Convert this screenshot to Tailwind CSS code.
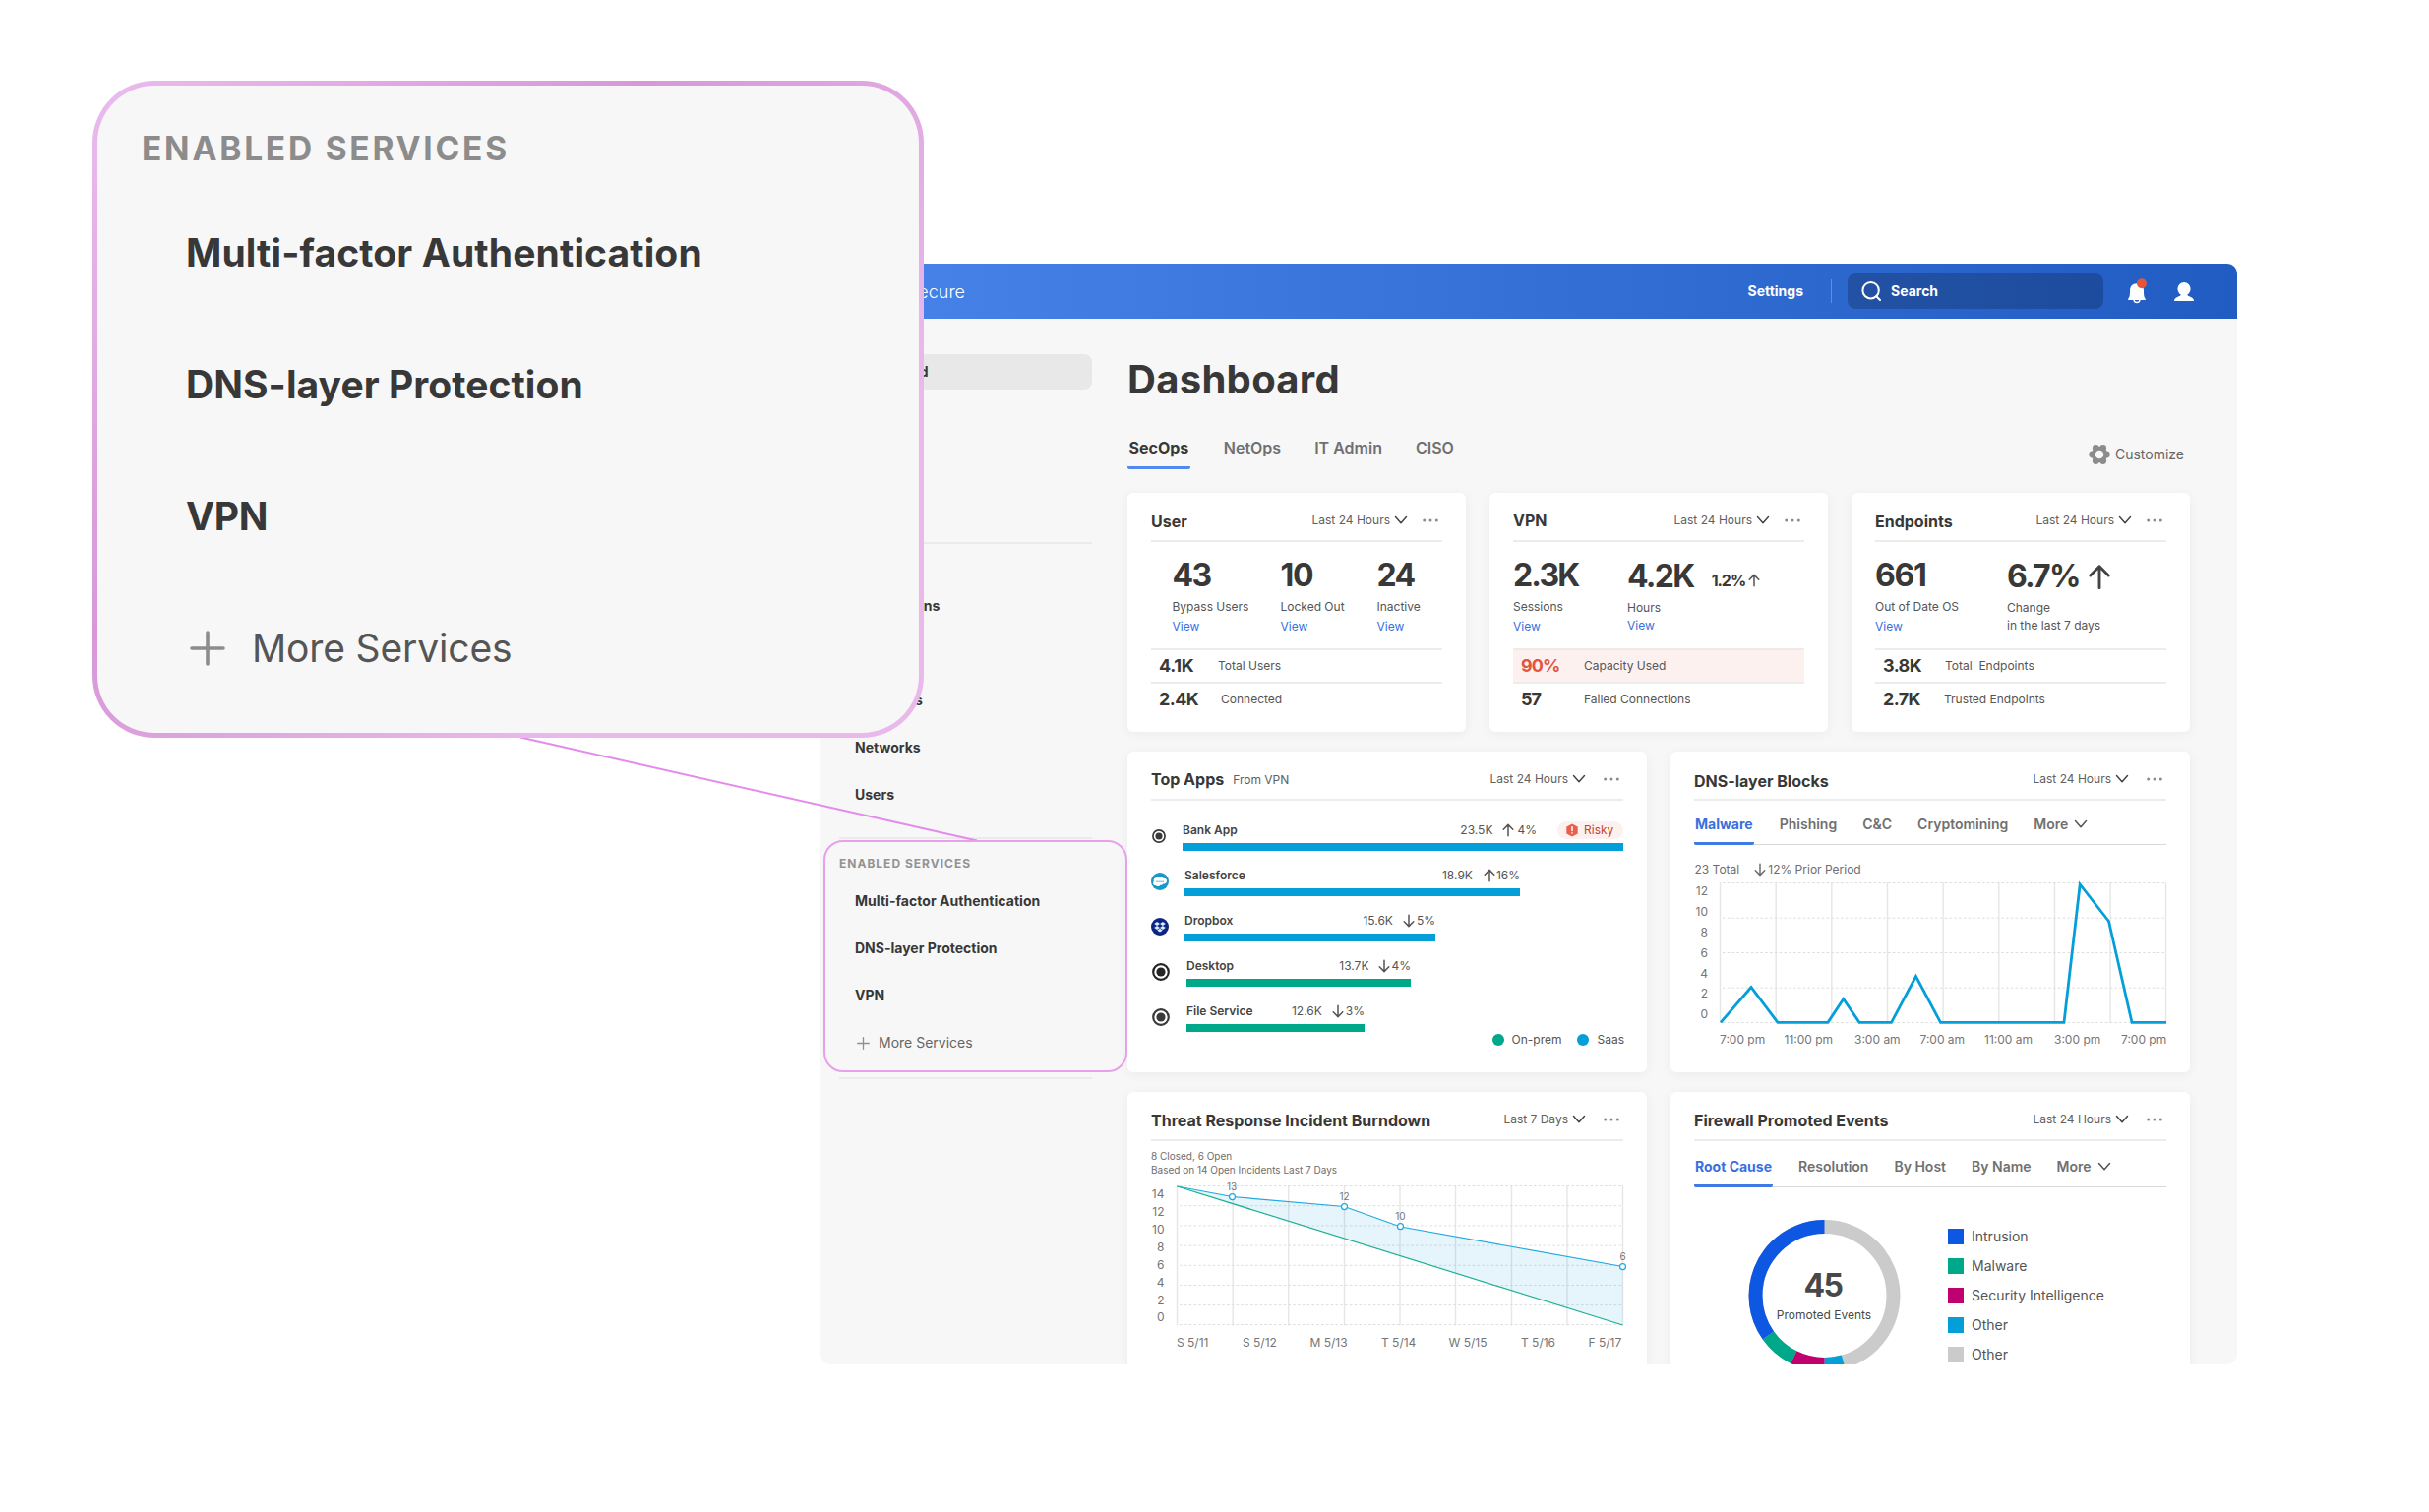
<!DOCTYPE html>
<html lang="en">
<head>
  <meta charset="UTF-8">
  <title>Secure - Dashboard</title>
  <meta name="viewport" content="width=device-width, initial-scale=1.0">
  <script src="https://cdn.jsdelivr.net/npm/@tailwindcss/browser@4"></script>
</head>
<body class="relative bg-white w-[2469px] h-[1537px] overflow-hidden font-['Inter',sans-serif] text-[#373837]">

  <!-- Shared icons -->
  <svg class="hidden">
    <symbol id="chevron" viewBox="0 0 14 10"><path d="M1.5 1.5 7 7.8 12.5 1.5" fill="none" stroke="currentColor" stroke-width="1.5" stroke-linecap="round" stroke-linejoin="round"/></symbol>
    <symbol id="dots" viewBox="0 0 16 4"><circle cx="1.7" cy="2" r="1.5"/><circle cx="8" cy="2" r="1.5"/><circle cx="14.3" cy="2" r="1.5"/></symbol>
    <symbol id="up" viewBox="0 0 12 14"><path d="M6 12.8V1.4M1.2 6.2 6 1.4l4.8 4.8" fill="none" stroke="currentColor" stroke-width="1.5" stroke-linecap="round" stroke-linejoin="round"/></symbol>
    <symbol id="down" viewBox="0 0 12 14"><path d="M6 1.2v11.4M1.2 7.8 6 12.6l4.8-4.8" fill="none" stroke="currentColor" stroke-width="1.5" stroke-linecap="round" stroke-linejoin="round"/></symbol>
    <symbol id="ring" viewBox="0 0 18 18"><circle cx="9" cy="9" r="7.8" fill="#fff" stroke="currentColor" stroke-width="2.2"/><circle cx="9" cy="9" r="4.6" fill="currentColor"/></symbol>
    <symbol id="plus" viewBox="0 0 36 36"><path d="M18 2v32M2 18h32" stroke="currentColor" stroke-width="3.6" stroke-linecap="round"/></symbol>
  </svg>

  <!-- App window -->
  <div class="ml-[834px] mt-[268px] w-[1440px] h-[1119px] rounded-[10px] overflow-hidden bg-[#f7f7f7]">
    <header class="flex items-center h-14 pr-11 bg-linear-to-r from-[#4884ea] to-[#215cc3] text-white text-sm font-bold">
      <span class="w-[147px] pt-0.5 text-right text-lg font-light">Secure</span>
      <span class="ml-auto">Settings</span>
      <span class="w-px h-6 ml-7 mr-4 bg-white/25"></span>
      <div class="flex items-center gap-2.5 w-[260px] h-9 pl-3.5 rounded-lg bg-black/20">
        <svg class="w-5 h-5" viewBox="0 0 20 20" fill="none" stroke="#fff" stroke-width="2" stroke-linecap="round"><circle cx="9.6" cy="9.2" r="8.2"/><path d="m15.2 15.2 3.8 3.8"/></svg>
        <span>Search</span>
      </div>
      <svg class="ml-6 w-5 h-[26px]" viewBox="0 0 20 26">
        <path d="M10 5.200c-4.600 0-7 3.200-7 7.200 0 5.200-.4 6.800-1.800 8.300v1.200h17.600v-1.200c-1.400-1.500-1.800-3.100-1.800-8.300 0-4-2.400-7.200-7-7.200z" fill="#fff"/>
        <path d="M7 21.500a3 3 0 0 0 6 0" fill="none" stroke="#fff" stroke-width="1.400"/>
        <circle cx="15" cy="5.200" r="5" fill="#e2563f"/>
      </svg>
      <svg class="ml-7 w-5 h-[19px]" viewBox="0 0 20 19" fill="#fff"><ellipse cx="10" cy="6.800" rx="6.600" ry="6.800"/><path d="M7 11.500h6c0 2.200 1.500 2.600 3.800 3.400 2.200.8 3.200 2.200 3.200 4.100H0c0-1.900 1-3.300 3.200-4.100C5.500 14.100 7 13.700 7 11.500z"/></svg>
    </header>

    <div class="flex">
      <!-- Sidebar -->
      <nav class="w-[276px] pl-[19px] text-sm font-bold">
        <div class="flex items-center mt-9 h-9 pl-4 rounded-lg bg-[#e8e8e8]">Dashboard</div>
        <div class="mt-[155px] h-0.5 bg-[#ebebeb]"></div>
        <ul class="mt-[39px] pl-4 leading-12">
          <li>Applications</li>
          <li class="mt-12">Endpoints</li>
          <li>Networks</li>
          <li>Users</li>
        </ul>
        <div class="mt-[19px] h-0.5 bg-[#ebebeb]"></div>
        <h3 class="mt-[17px] text-xs leading-4 font-bold tracking-[1px] text-[#939393]">ENABLED SERVICES</h3>
        <ul class="mt-1.5 pl-4 leading-12">
          <li class="tracking-[0.040px]">Multi-factor Authentication</li>
          <li>DNS-layer Protection</li>
          <li>VPN</li>
          <li class="flex items-center gap-[9.500px] pl-[1.500px] font-normal text-[#666]"><svg class="w-[13px] h-[13px] text-[#8f8f8f]"><use href="#plus"/></svg>More Services</li>
        </ul>
        <div class="mt-[11px] h-0.5 bg-[#ebebeb]"></div>
      </nav>

      <!-- Dashboard -->
      <main class="w-[1080px] ml-9">
        <h1 class="pt-[38px] text-[40px] leading-12 font-bold tracking-[0.300px]">Dashboard</h1>

        <div class="flex justify-between mt-[23px] h-11">
          <div class="flex gap-[34px] font-semibold text-[#707070]">
            <span class="flex items-center px-[1.500px] pt-[3px] border-b-[3px] border-[#5389ee] rounded-b-xs font-bold text-[#373837]">SecOps</span>
            <span class="flex items-center">NetOps</span>
            <span class="flex items-center">IT Admin</span>
            <span class="flex items-center">CISO</span>
          </div>
          <div class="flex items-center gap-[5px] pt-3.5 pr-1.5 text-sm text-[#666]">
            <svg class="w-[22px] h-[22px]" viewBox="-11 -11 22 22" fill="#8c8c8c">
              <circle r="8.200"/><circle cx="7.300" r="3.400"/><circle cx="-7.300" r="3.400"/><circle cx="3.700" cy="6.500" r="3.400"/><circle cx="-3.700" cy="6.500" r="3.400"/><circle cx="3.700" cy="-6.500" r="3.400"/><circle cx="-3.700" cy="-6.500" r="3.400"/><circle r="4.300" fill="#f7f7f7"/>
            </svg>
            Customize
          </div>
        </div>

        <!-- Row 1 -->
        <div class="grid grid-cols-3 gap-6 mt-6">
          <section class="h-[243px] px-6 rounded-md bg-white shadow-[0_2px_12px_rgba(0,0,0,0.05)]">
            <div class="flex items-center h-[50px] pt-2 border-b-2 border-[#ececec]">
              <h2 class="pt-0.5 font-bold">User</h2>
              <span class="ml-auto text-xs text-[#606060]">Last 24 Hours</span>
              <svg class="ml-1 w-3.5 h-2.5 text-[#444]"><use href="#chevron"/></svg>
              <svg class="ml-[15px] mr-1 w-4 h-1 fill-[#8a8a8a]"><use href="#dots"/></svg>
            </div>
            <div class="flex h-[108px] pt-4 pl-[21.500px] text-xs leading-5 text-[#555]">
              <div class="w-[110px]">
                <div class="mb-1 text-[32px] leading-9 font-bold tracking-[-1.700px] text-[#373837]">43</div>
                <div>Bypass Users</div>
                <div class="text-[#3a70de]">View</div>
              </div>
              <div class="w-[98px]">
                <div class="mb-1 text-[32px] leading-9 font-bold tracking-[-1.300px] text-[#373837]">10</div>
                <div>Locked Out</div>
                <div class="text-[#3a70de]">View</div>
              </div>
              <div>
                <div class="mb-1 text-[32px] leading-9 font-bold tracking-[-1.700px] text-[#373837]">24</div>
                <div>Inactive</div>
                <div class="text-[#3a70de]">View</div>
              </div>
            </div>
            <div class="flex items-center h-[34px] pl-2 border-t-2 border-[#ececec] text-xs text-[#555]">
              <b class="w-[60px] text-lg tracking-[-0.300px] text-[#373837]">4.1K</b>Total Users
            </div>
            <div class="flex items-center h-[34px] pl-2 border-t-2 border-[#ececec] text-xs text-[#555]">
              <b class="w-[63px] text-lg tracking-[-0.600px] text-[#373837]">2.4K</b>Connected
            </div>
          </section>

          <section class="h-[243px] px-6 rounded-md bg-white shadow-[0_2px_12px_rgba(0,0,0,0.05)]">
            <div class="flex items-center h-[50px] pt-2 border-b-2 border-[#ececec]">
              <h2 class="font-bold">VPN</h2>
              <span class="ml-auto text-xs text-[#606060]">Last 24 Hours</span>
              <svg class="ml-1 w-3.5 h-2.5 text-[#444]"><use href="#chevron"/></svg>
              <svg class="ml-[15px] mr-1 w-4 h-1 fill-[#8a8a8a]"><use href="#dots"/></svg>
            </div>
            <div class="flex h-[108px] pt-4 text-xs leading-5 text-[#555]">
              <div class="w-[116px]">
                <div class="mb-1 text-[32px] leading-9 font-bold tracking-[-1.800px] text-[#373837]">2.3K</div>
                <div>Sessions</div>
                <div class="text-[#3a70de]">View</div>
              </div>
              <div class="pt-px leading-[18px]">
                <div class="flex items-center mb-[5px] text-[32px] leading-9 font-bold tracking-[-1.700px] text-[#373837]">
                  4.2K
                  <span class="ml-[18px] pt-[7px] text-base tracking-[-1px]">1.2%</span>
                  <svg class="ml-[3px] mt-[7px] w-3 h-3.5 text-[#555]"><use href="#up"/></svg>
                </div>
                <div>Hours</div>
                <div class="text-[#3a70de]">View</div>
              </div>
            </div>
            <div class="flex items-center h-[34px] pl-2 border-t-2 border-[#f0e9e8] bg-[#fcf1ef] text-xs text-[#555]">
              <b class="w-[64px] text-lg tracking-[-0.900px] text-[#e2563f]">90%</b>Capacity Used
            </div>
            <div class="flex items-center h-[34px] pl-2 border-t-2 border-[#ececec] text-xs text-[#555]">
              <b class="w-[64px] text-lg tracking-[-0.900px] text-[#373837]">57</b>Failed Connections
            </div>
          </section>

          <section class="h-[243px] px-6 rounded-md bg-white shadow-[0_2px_12px_rgba(0,0,0,0.05)]">
            <div class="flex items-center h-[50px] pt-2 border-b-2 border-[#ececec]">
              <h2 class="pt-0.5 font-bold">Endpoints</h2>
              <span class="ml-auto text-xs text-[#606060]">Last 24 Hours</span>
              <svg class="ml-1 w-3.5 h-2.5 text-[#444]"><use href="#chevron"/></svg>
              <svg class="ml-[15px] mr-1 w-4 h-1 fill-[#8a8a8a]"><use href="#dots"/></svg>
            </div>
            <div class="flex h-[108px] pt-4 text-xs leading-5 text-[#555]">
              <div class="w-[134px]">
                <div class="mb-1 text-[32px] leading-9 font-bold tracking-[-1.300px] text-[#373837]">661</div>
                <div>Out of Date OS</div>
                <div class="text-[#3a70de]">View</div>
              </div>
              <div class="pt-px leading-[18px]">
                <div class="flex items-center mb-[5px] text-[32px] leading-9 font-bold tracking-[-1.800px] text-[#373837]">
                  6.7%
                  <svg class="ml-2 w-6 h-[27px] text-[#444]"><use href="#up"/></svg>
                </div>
                <div>Change</div>
                <div>in the last 7 days</div>
              </div>
            </div>
            <div class="flex items-center h-[34px] pl-2 border-t-2 border-[#ececec] text-xs text-[#555]">
              <b class="w-[63px] text-lg tracking-[-0.600px] text-[#373837]">3.8K</b>Total&nbsp; Endpoints
            </div>
            <div class="flex items-center h-[34px] pl-2 border-t-2 border-[#ececec] text-xs text-[#555]">
              <b class="w-[62px] text-lg tracking-[-0.600px] text-[#373837]">2.7K</b>Trusted Endpoints
            </div>
          </section>
        </div>

        <div class="grid grid-cols-2 gap-x-6 gap-y-5 mt-5">
          <!-- Top Apps -->
          <section class="h-[326px] px-6 rounded-md bg-white shadow-[0_2px_12px_rgba(0,0,0,0.05)]">
            <div class="flex items-center h-[50px] pt-2 border-b-2 border-[#ececec]">
              <h2 class="font-bold">Top Apps</h2>
              <span class="ml-[9px] pt-0.5 text-xs text-[#606060]">From VPN</span>
              <span class="ml-auto text-xs text-[#606060]">Last 24 Hours</span>
              <svg class="ml-1 w-3.5 h-2.5 text-[#444]"><use href="#chevron"/></svg>
              <svg class="ml-[18px] mr-1 w-4 h-1 fill-[#8a8a8a]"><use href="#dots"/></svg>
            </div>
            <ul class="flex flex-col gap-4 pt-[21px] text-xs leading-[18px] text-[#555]">
              <li class="flex items-center h-[30px]">
                <svg class="ml-px mr-[17px] w-3.5 h-3.5 text-[#3a3a3a]"><use href="#ring"/></svg>
                <div class="w-[448px]">
                  <div class="flex items-center">
                    <span class="mr-auto font-semibold text-[#444]">Bank App</span>23.5K
                    <svg class="ml-2.5 mr-[3px] w-3 h-3.5"><use href="#up"/></svg>4%
                    <span class="flex items-center gap-1.5 w-[67px] h-[18px] ml-[21px] pl-[9px] rounded-full bg-[#fcf1ef] text-[#c9432f]">
                      <svg class="w-3 h-3.5" viewBox="0 0 12 14"><path d="M6 .5 11.700 3.600v6.800L6 13.500.3 10.400V3.600z" fill="#e8604a"/><path d="M6 3.800v3.700M6 9.700v.4" stroke="#fff" stroke-width="1.500" stroke-linecap="round"/></svg>
                      Risky
                    </span>
                  </div>
                  <div class="h-2 mt-1 bg-[#049fd9]"></div>
                </div>
              </li>
              <li class="flex items-center h-[30px]">
                <svg class="mr-4 w-[18px] h-[18px]" viewBox="0 0 18 18">
                  <circle cx="9" cy="9" r="9" fill="#1798c9"/>
                  <path d="M5 13.200c-1.600.2-3-1-2.900-2.500 0-.8.3-1.300.7-1.700C2 7 3.500 5 5.400 5.200c1-.9 2.600-.9 3.500.1 1.100-1 3-.8 3.700.6 1.800-.6 3.500.7 3.400 2.700 0 2-1.700 3.300-3.500 3-.7 1-1.800 1.300-2.900.8-.8 1.700-3.700 2-4.600.8z" fill="#fff"/>
                  <path d="M5 9.200h8" stroke="#6fc0e0" stroke-width="1.100"/>
                </svg>
                <div class="w-[341px]">
                  <div class="flex items-center">
                    <span class="mr-auto font-semibold text-[#444]">Salesforce</span>18.9K
                    <svg class="ml-[11px] mr-px w-3 h-3.5"><use href="#up"/></svg>16%
                  </div>
                  <div class="h-2 mt-1 bg-[#049fd9]"></div>
                </div>
              </li>
              <li class="flex items-center h-[30px]">
                <svg class="mr-4 w-[18px] h-[18px]" viewBox="0 0 18 18">
                  <circle cx="9" cy="9" r="9" fill="#0d2481"/>
                  <path d="M6.100 4 9 6 6.100 8 3.200 6zM11.900 4l2.900 2-2.900 2L9 6zM6.100 8 9 10l-2.900 2-2.900-2zM11.900 8l2.900 2-2.900 2L9 10zM6.200 12.700 9 10.800l2.800 1.900L9 14.500z" fill="#d5ebfb"/>
                </svg>
                <div class="w-[255px]">
                  <div class="flex items-center">
                    <span class="mr-auto font-semibold text-[#444]">Dropbox</span>15.6K
                    <svg class="ml-2.5 mr-0.5 w-3 h-3.5"><use href="#down"/></svg>5%
                  </div>
                  <div class="h-2 mt-1 bg-[#049fd9]"></div>
                </div>
              </li>
              <li class="flex items-center h-[30px]">
                <svg class="ml-px mr-[17px] w-[18px] h-[18px] text-[#242424]"><use href="#ring"/></svg>
                <div class="w-[228px]">
                  <div class="flex items-center">
                    <span class="mr-auto font-semibold text-[#444]">Desktop</span>13.7K
                    <svg class="ml-2.5 mr-px w-3 h-3.5"><use href="#down"/></svg>4%
                  </div>
                  <div class="h-2 mt-1 bg-[#00a88a]"></div>
                </div>
              </li>
              <li class="flex items-center h-[30px]">
                <svg class="ml-px mr-[17px] w-[18px] h-[18px] text-[#3a3a3a]"><use href="#ring"/></svg>
                <div class="w-[181px]">
                  <div class="flex items-center">
                    <span class="mr-auto font-semibold text-[#444]">File Service</span>12.6K
                    <svg class="ml-2.5 mr-0.5 w-3 h-3.5"><use href="#down"/></svg>3%
                  </div>
                  <div class="h-2 mt-1 bg-[#00a88a]"></div>
                </div>
              </li>
            </ul>
            <div class="flex items-center justify-end text-xs text-[#555]">
              <span class="w-3 h-3 mr-2 rounded-full bg-[#00a88a]"></span>On-prem
              <span class="w-3 h-3 ml-4 mr-2 rounded-full bg-[#049fd9]"></span><span class="-mr-px">Saas</span>
            </div>
          </section>

          <!-- DNS-layer Blocks -->
          <section class="h-[326px] px-6 rounded-md bg-white shadow-[0_2px_12px_rgba(0,0,0,0.05)]">
            <div class="flex items-center h-[50px] pt-2 border-b-2 border-[#ececec]">
              <h2 class="pt-[3px] font-bold">DNS-layer Blocks</h2>
              <span class="ml-auto text-xs text-[#606060]">Last 24 Hours</span>
              <svg class="ml-1 w-3.5 h-2.5 text-[#444]"><use href="#chevron"/></svg>
              <svg class="ml-[18px] mr-1 w-4 h-1 fill-[#8a8a8a]"><use href="#dots"/></svg>
            </div>
            <div class="flex gap-[26px] h-[45px] border-b border-[#d8d8d8] text-sm font-semibold text-[#707070]">
              <span class="flex items-center h-[45px] px-px pt-1.5 border-b-[3px] border-[#3f7ae4] rounded-b-xs font-bold text-[#3a70de]">Malware</span>
              <span class="flex items-center pt-1">Phishing</span>
              <span class="flex items-center pt-1">C&amp;C</span>
              <span class="flex items-center pt-1">Cryptomining</span>
              <span class="flex items-center gap-1.5 pt-1">More <svg class="w-3.5 h-2.5 text-[#555]"><use href="#chevron"/></svg></span>
            </div>
            <div class="flex items-center pt-[17px] pl-[0.500px] text-xs text-[#6e6e6e]">
              23 Total
              <svg class="ml-[15px] mr-0.5 w-3 h-3.5"><use href="#down"/></svg>12% Prior Period
            </div>
            <svg class="w-[480px] h-[174px] overflow-visible text-xs" viewBox="0 0 480 174">
              <path d="M26.500 5v143M83.200 5v143M139.800 5v143M196.500 5v143M253.100 5v143M309.800 5v143M366.500 5v143M423.100 5v143M479.500 5v143" stroke="#e6e6e6" stroke-width="1.400"/>
              <path d="M29 5.500h450M29 41.200h450M29 76.500h450M29 112.200h450M29 147.500h450" stroke="#dedede" stroke-dasharray="2.600 2.200"/>
              <polyline points="27,147.300 58,111.500 85,147.300 136,147.300 151.800,123.500 168,147.300 200.500,147.300 225.500,100.500 250.500,147.300 376,147.300 392.200,7 421.500,44.500 445,147.300 480,147.300" fill="none" stroke="#049fd9" stroke-width="2.800"/>
              <g fill="#757575" text-anchor="end">
                <text x="14" y="17.900">12</text><text x="14" y="38.900">10</text><text x="14" y="59.700">8</text><text x="14" y="80.500">6</text><text x="14" y="101.500">4</text><text x="14" y="122.300">2</text><text x="14" y="143.200">0</text>
              </g>
              <g fill="#757575">
                <text x="26" y="169.300">7:00 pm</text><text x="91.500" y="169.300">11:00 pm</text><text x="163" y="169.300">3:00 am</text><text x="229.500" y="169.300">7:00 am</text><text x="295" y="169.300">11:00 am</text><text x="366" y="169.300">3:00 pm</text><text x="434" y="169.300">7:00 pm</text>
              </g>
            </svg>
          </section>

          <!-- Burndown -->
          <section class="h-[326px] px-6 rounded-md bg-white shadow-[0_2px_12px_rgba(0,0,0,0.05)]">
            <div class="flex items-center h-[50px] pt-2 border-b-2 border-[#ececec]">
              <h2 class="pt-0.5 font-bold">Threat Response Incident Burndown</h2>
              <span class="ml-auto text-xs text-[#606060]">Last 7 Days</span>
              <svg class="ml-1 w-3.5 h-2.5 text-[#444]"><use href="#chevron"/></svg>
              <svg class="ml-[18px] mr-1 w-4 h-1 fill-[#8a8a8a]"><use href="#dots"/></svg>
            </div>
            <p class="pt-2 text-[10px] leading-[14px] text-[#6e6e6e]">8 Closed, 6 Open<br>Based on 14 Open Incidents Last 7 Days</p>
            <svg class="w-[480px] h-[180px] overflow-visible text-xs" viewBox="0 0 480 180">
              <path d="M26.500 9v142.500M83.200 9v142.500M139.700 9v142.500M196.500 9v142.500M253 9v142.500M309.500 9v142.500M366.500 9v142.500M423 9v142.500M479.500 9v142.500" stroke="#e6e6e6" stroke-width="1.400"/>
              <path d="M29 9.500h450M29 29.700h450M29 49.900h450M29 70.100h450M29 90.300h450M29 110.500h450M29 130.600h450M29 150.500h450" stroke="#dedede" stroke-dasharray="2.600 2.200"/>
              <path d="M26.500 10 82.500 20.500l114 10 57 20.500 226 40.500v59.500z" fill="#049fd9" fill-opacity=".1"/>
              <polyline points="26.500,10 82.500,20.500 196.500,30.500 253.500,51 479.500,91.500" fill="none" stroke="#1fa9e0" stroke-width="1.200"/>
              <path d="M26.500 10 479.500 151" stroke="#1cb08f" stroke-width="1.200"/>
              <g fill="#fff" stroke="#1fa9e0" stroke-width="1.200"><circle cx="82.500" cy="20.600" r="3"/><circle cx="196.500" cy="30.600" r="3"/><circle cx="253.500" cy="50.700" r="3"/><circle cx="479.500" cy="91.600" r="3"/></g>
              <g fill="#757575" font-size="10" text-anchor="middle"><text x="82" y="14.300">13</text><text x="196.500" y="24.200">12</text><text x="253.500" y="44.300">10</text><text x="479.500" y="85.300">6</text></g>
              <g fill="#757575" text-anchor="end">
                <text x="13.500" y="22.300">14</text><text x="13.500" y="40.200">12</text><text x="13.500" y="58">10</text><text x="13.500" y="75.900">8</text><text x="13.500" y="93.800">6</text><text x="13.500" y="111.700">4</text><text x="13.500" y="129.500">2</text><text x="13.500" y="147.400">0</text>
              </g>
              <g fill="#757575">
                <text x="26" y="173">S 5/11</text><text x="93" y="173">S 5/12</text><text x="161.500" y="173">M 5/13</text><text x="234" y="173">T 5/14</text><text x="302.500" y="173">W 5/15</text><text x="376" y="173">T 5/16</text><text x="444.500" y="173">F 5/17</text>
              </g>
            </svg>
          </section>

          <!-- Firewall -->
          <section class="h-[326px] px-6 rounded-md bg-white shadow-[0_2px_12px_rgba(0,0,0,0.05)]">
            <div class="flex items-center h-[50px] pt-2 border-b-2 border-[#ececec]">
              <h2 class="pt-0.5 font-bold">Firewall Promoted Events</h2>
              <span class="ml-auto text-xs text-[#606060]">Last 24 Hours</span>
              <svg class="ml-1 w-3.5 h-2.5 text-[#444]"><use href="#chevron"/></svg>
              <svg class="ml-[18px] mr-1 w-4 h-1 fill-[#8a8a8a]"><use href="#dots"/></svg>
            </div>
            <div class="flex gap-[26px] h-[47px] border-b border-[#d8d8d8] text-sm font-semibold text-[#707070]">
              <span class="flex items-center h-[47px] px-px pt-2 border-b-[3px] border-[#3f7ae4] rounded-b-xs font-bold text-[#3a70de]">Root Cause</span>
              <span class="flex items-center pt-1.5">Resolution</span>
              <span class="flex items-center pt-1.5">By Host</span>
              <span class="flex items-center pt-1.5">By Name</span>
              <span class="flex items-center gap-1.5 pt-1.5">More <svg class="w-3.5 h-2.5 text-[#555]"><use href="#chevron"/></svg></span>
            </div>
            <div class="flex pt-[33px] pl-[55px]">
              <svg class="w-[155px] h-[154px]" viewBox="-77.500 -77 155 154">
                <!-- pathLength in degrees, clockwise from the top -->
                <g fill="none" stroke-width="14" transform="rotate(-90)">
                  <circle r="70" pathLength="360" stroke="#cbcbcb"/>
                  <circle r="70" pathLength="360" stroke="#049fd9" stroke-dasharray="16 344" stroke-dashoffset="-164"/>
                  <circle r="70" pathLength="360" stroke="#bf006f" stroke-dasharray="26.600 333.400" stroke-dashoffset="-180"/>
                  <circle r="70" pathLength="360" stroke="#00a88a" stroke-dasharray="28.100 331.900" stroke-dashoffset="-206.600"/>
                  <circle r="70" pathLength="360" stroke="#0d57e3" stroke-dasharray="125.300 234.700" stroke-dashoffset="-234.700"/>
                </g>
                <g fill="#484848" text-anchor="middle">
                  <text x="-1.500" y="1.200" font-size="32" font-weight="700" letter-spacing="-1.500">45</text>
                  <text x="-.5" y="24.300" font-size="12">Promoted Events</text>
                </g>
              </svg>
              <ul class="ml-12 mt-0.5 text-sm leading-[30px] text-[#555]">
                <li class="flex items-center gap-2"><i class="w-4 h-4 bg-[#0d57e3]"></i>Intrusion</li>
                <li class="flex items-center gap-2"><i class="w-4 h-4 bg-[#00a88a]"></i>Malware</li>
                <li class="flex items-center gap-2"><i class="w-4 h-4 bg-[#bf006f]"></i>Security Intelligence</li>
                <li class="flex items-center gap-2"><i class="w-4 h-4 bg-[#049fd9]"></i>Other</li>
                <li class="flex items-center gap-2"><i class="w-4 h-4 bg-[#cbcbcb]"></i>Other</li>
              </ul>
            </div>
          </section>
        </div>
      </main>
    </div>
  </div>

  <!-- Callout: connector, small frame, magnified panel -->
  <svg class="absolute left-[520px] top-[740px] w-[480px] h-[120px]" viewBox="0 0 480 120"><path d="M9 9.500 473 114.500" stroke="#e38ce9" stroke-width="2"/></svg>
  <div class="absolute left-[837px] top-[854px] w-[309px] h-[236px] rounded-[20px] border-2 border-[#e89fec]"></div>
  <div class="absolute left-[94px] top-[82px] w-[845px] h-[668px] p-[5px] rounded-[63px] bg-linear-135 from-[#eabcee] from-0% via-[#d898d8] via-37% to-[#e9b9ec] to-75%">
    <div class="h-full pl-[45px] pt-[43px] rounded-[58px] bg-[#f7f7f7]">
      <h3 class="text-[33.500px] leading-[42px] font-bold tracking-[2.770px] text-[#8c8c8c]">ENABLED SERVICES</h3>
      <ul class="pl-[45px] mt-[18px] text-[39px] leading-[134px] font-bold">
        <li class="tracking-[0.120px]">Multi-factor Authentication</li>
        <li class="tracking-[0.060px]">DNS-layer Protection</li>
        <li class="tracking-[-0.300px]">VPN</li>
        <li class="flex items-center gap-[27px] pl-1 font-normal tracking-[-0.150px] text-[#555]"><svg class="w-9 h-9 text-[#8c8c8c]"><use href="#plus"/></svg>More Services</li>
      </ul>
    </div>
  </div>
</body>
</html>
